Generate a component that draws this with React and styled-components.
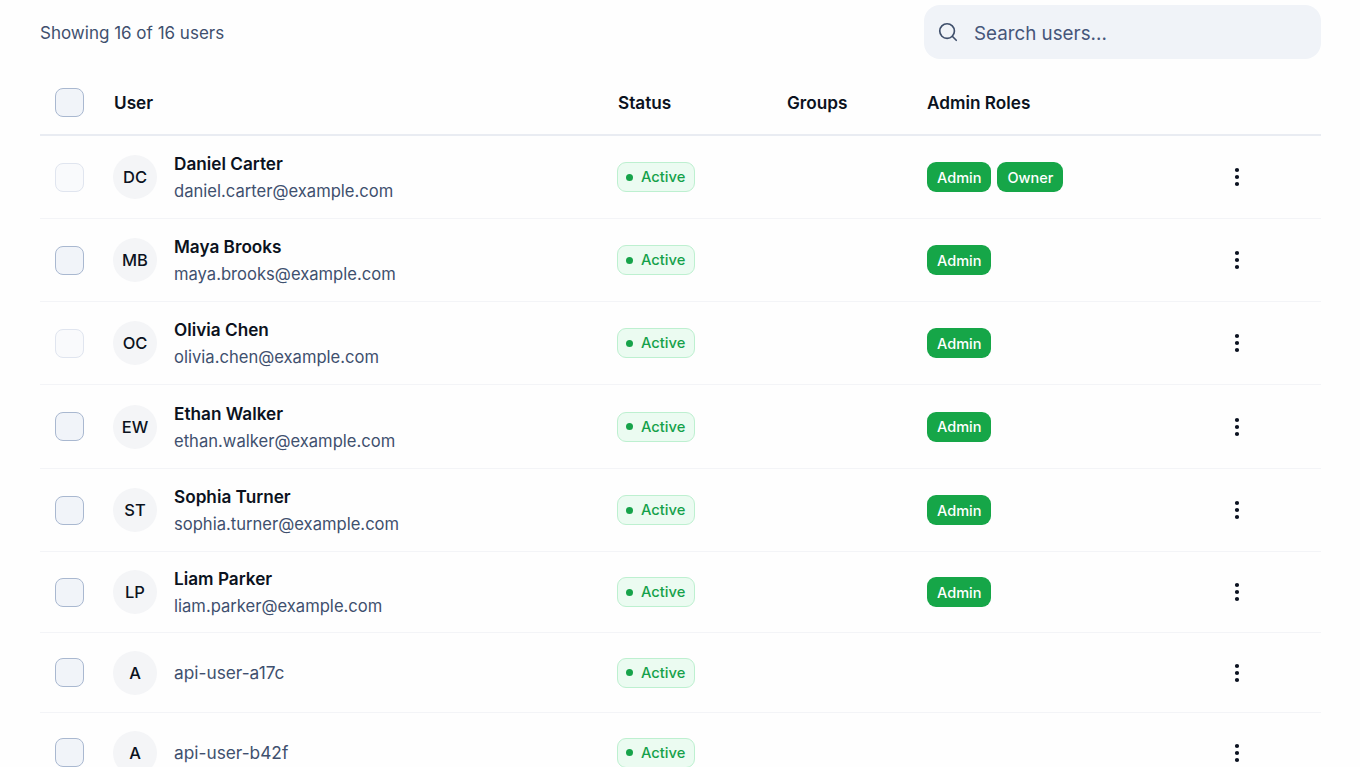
import React from "react";
import styled, { createGlobalStyle } from "styled-components";
import { Search, MoreVertical } from "lucide-react";

const users = [
  { initials: "DC", name: "Daniel Carter", email: "daniel.carter@example.com", roles: ["Admin", "Owner"], faint: true, height: 83 },
  { initials: "MB", name: "Maya Brooks", email: "maya.brooks@example.com", roles: ["Admin"], height: 83 },
  { initials: "OC", name: "Olivia Chen", email: "olivia.chen@example.com", roles: ["Admin"], faint: true, height: 83 },
  { initials: "EW", name: "Ethan Walker", email: "ethan.walker@example.com", roles: ["Admin"], height: 84 },
  { initials: "ST", name: "Sophia Turner", email: "sophia.turner@example.com", roles: ["Admin"], height: 83 },
  { initials: "LP", name: "Liam Parker", email: "liam.parker@example.com", roles: ["Admin"], height: 81 },
  { initials: "A", handle: "api-user-a17c", roles: [], height: 80 },
  { initials: "A", handle: "api-user-b42f", roles: [], height: 80 },
];

export default function App() {
  return (
    <>
      <GlobalStyle />
      <Page>
        <TopBar>
          <Count>Showing 16 of 16 users</Count>
          <SearchBox>
            <Search size={22} strokeWidth={1.8} color="#3f4f6b" />
            <SearchInput placeholder="Search users..." />
          </SearchBox>
        </TopBar>
        <HeadRow>
          <CheckCell><Checkbox /></CheckCell>
          <HeadLabel>User</HeadLabel>
          <HeadLabel>Status</HeadLabel>
          <HeadLabel>Groups</HeadLabel>
          <HeadLabel>Admin Roles</HeadLabel>
        </HeadRow>
        {users.map((u) => (
          <Row key={u.email || u.handle} $height={u.height}>
            <CheckCell><Checkbox $faint={u.faint} /></CheckCell>
            <UserCell>
              <Avatar>{u.initials}</Avatar>
              {u.handle ? (
                <Handle>{u.handle}</Handle>
              ) : (
                <div>
                  <Name>{u.name}</Name>
                  <Email>{u.email}</Email>
                </div>
              )}
            </UserCell>
            <div>
              <StatusPill><Dot />Active</StatusPill>
            </div>
            <div />
            <Roles>
              {u.roles.map((r) => <RolePill key={r}>{r}</RolePill>)}
            </Roles>
            <Actions>
              <MoreVertical size={24} strokeWidth={2.2} color="#0b1220" />
            </Actions>
          </Row>
        ))}
      </Page>
    </>
  );
}

const GlobalStyle = createGlobalStyle`
  html, body {
    margin: 0;
    background: #fefefe;
    overflow: hidden;
    height: 767px;
  }
  * { box-sizing: border-box; }
`;

const Page = styled.div`
  padding: 5px 39px 0 40px;
  font-family: Inter, "Liberation Sans", sans-serif;
  color: #0b1220;
`;

const TopBar = styled.div`
  display: flex;
  justify-content: space-between;
  align-items: center;
  height: 54px;
`;

const Count = styled.div`
  font-size: 17px;
  padding-top: 2px;
  color: #3f506e;
`;

const SearchBox = styled.div`
  width: 397px;
  height: 54px;
  padding: 0 13px;
  display: flex;
  align-items: center;
  gap: 15px;
  background: #f0f3f8;
  border-radius: 16px;
`;

const SearchInput = styled.input`
  flex: 1;
  border: none;
  outline: none;
  background: transparent;
  padding: 2px 0 0;
  font: 400 18.8px Inter, "Liberation Sans", sans-serif;
  &::placeholder {
    color: #46567a;
    opacity: 1;
  }
`;

const columns = "74px 504px 169px 140px 1fr 96px";

const HeadRow = styled.div`
  display: grid;
  grid-template-columns: ${columns};
  align-items: center;
  height: 77px;
  padding-top: 11px;
  border-bottom: 2px solid #e9ecf2;
`;

const HeadLabel = styled.div`
  font-size: 17.2px;
  font-weight: 600;
`;

const Row = styled.div`
  display: grid;
  grid-template-columns: ${columns};
  align-items: center;
  height: ${(p) => p.$height}px;
  border-bottom: 1px solid #f3f4f7;
`;

const CheckCell = styled.div`
  padding-left: 15px;
  display: flex;
`;

const Checkbox = styled.div`
  width: 29px;
  height: 29px;
  border-radius: 8px;
  background: ${(p) => (p.$faint ? "#f9fafc" : "#f1f4f9")};
  border: 1.5px solid ${(p) => (p.$faint ? "#e0e5ef" : "#a9b8d0")};
`;

const UserCell = styled.div`
  display: flex;
  align-items: center;
  gap: 17px;
  margin-left: -1px;
`;

const Avatar = styled.div`
  width: 44px;
  height: 44px;
  border-radius: 50%;
  background: #f4f5f7;
  display: flex;
  align-items: center;
  justify-content: center;
  font-size: 16.5px;
  font-weight: 500;
`;

const Name = styled.div`
  font-size: 17.2px;
  font-weight: 600;
  line-height: 29px;
`;

const Email = styled.div`
  font-size: 16.6px;
  line-height: 27px;
  color: #3f506e;
`;

const Handle = styled.div`
  font-size: 17.3px;
  line-height: 28px;
  padding-top: 1px;
  color: #3f506e;
`;

const StatusPill = styled.div`
  display: inline-flex;
  align-items: center;
  gap: 8px;
  height: 30px;
  margin-left: -1px;
  padding: 0 9px 0 8px;
  border-radius: 9px;
  background: #ebfbf1;
  border: 1.5px solid #bdf0d0;
  color: #15a14a;
  font-size: 14.7px;
  font-weight: 500;
`;

const Dot = styled.span`
  width: 7px;
  height: 7px;
  border-radius: 50%;
  background: #16a34a;
`;

const Roles = styled.div`
  display: flex;
  gap: 6px;
`;

const RolePill = styled.div`
  height: 30px;
  padding: 0 10px;
  display: flex;
  align-items: center;
  border-radius: 9px;
  background: #16a648;
  color: #fff;
  font-size: 14.5px;
  font-weight: 500;
`;

const Actions = styled.div`
  display: flex;
  justify-content: flex-start;
`;
